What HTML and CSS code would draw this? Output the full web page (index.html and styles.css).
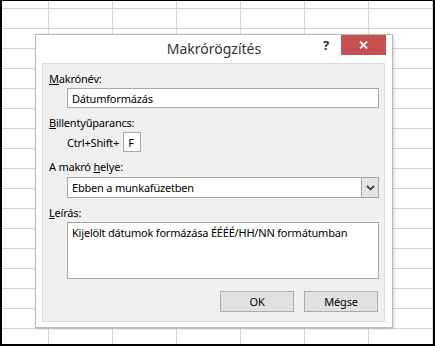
FILE: index.html
```html
<!DOCTYPE html>
<html lang="hu">
  <head>
    <meta charset="UTF-8" />
    <meta name="viewport" content="width=device-width, initial-scale=1.0" />
    <title>Makrórögzítés</title>
    <link rel="stylesheet" href="styles.css">
  </head>
  <body>
    <div class="sheet">
      <div class="dialog">
        <div class="title-bar">
          <span></span>
          <span class="title">Makrórögzítés</span>
          <div class="controls">
            <span class="help">?</span>
            <span class="close">
              <svg width="9" height="8" viewBox="0 0 9 8">
                <path d="M1 0.5 L8 7.5 M8 0.5 L1 7.5" stroke="#fff" stroke-width="1.8" />
              </svg>
            </span>
          </div>
        </div>
        <div class="panel">
          <div class="label"><u>M</u>akrónév:</div>
          <input class="field" type="text" value="Dátumformázás">
          <div class="label gap"><u>B</u>illentyűparancs:</div>
          <div class="shortcut">
            <span>Ctrl+Shift+</span>
            <input class="key" type="text" value="F">
          </div>
          <div class="label gap">A makró <u>h</u>elye:</div>
          <div class="select">
            <span class="select-text">Ebben a munkafüzetben</span>
            <span class="arrow">
              <svg width="9" height="6" viewBox="0 0 9 6">
                <path d="M1 1 L4.5 4.5 L8 1" stroke="#444" stroke-width="1.8" fill="none" />
              </svg>
            </span>
          </div>
          <div class="label gap"><u>L</u>eírás:</div>
          <textarea class="desc">Kijelölt dátumok formázása ÉÉÉÉ/HH/NN formátumban</textarea>
          <div class="buttons">
            <button>OK</button>
            <button>Mégse</button>
          </div>
        </div>
      </div>
    </div>
  </body>
</html>
```

FILE: styles.css
```css
body {
  margin: 0;
  font-family: "Noto Sans", "Open Sans", sans-serif;
  font-size: 11px;
  letter-spacing: -0.2px;
  color: #000;
}
.sheet {
  box-sizing: border-box;
  width: 435px;
  height: 346px;
  border: 2px solid #000;
  border-top-width: 1px;
  background-color: #fff;
  background-image: linear-gradient(to right, #d4d4d4 1px, transparent 1px),
    linear-gradient(to bottom, #d4d4d4 1px, transparent 1px);
  background-size: 64px 20px;
  background-position: 46px 7px;
  padding: 33px 0 0 33px;
}
.dialog {
  width: 356px;
  background: #fff;
  border: 1px solid #b9b9b9;
  box-shadow: 1px 1px 3px rgba(0, 0, 0, 0.18);
}
.title-bar {
  display: grid;
  grid-template-columns: 1fr auto 1fr;
  height: 28px;
}
.title {
  font-size: 14px;
  letter-spacing: 0;
  line-height: 28px;
  color: #333;
}
.controls {
  display: flex;
  justify-content: flex-end;
  align-items: flex-start;
  padding-right: 6px;
}
.help {
  font-weight: bold;
  font-size: 13px;
  line-height: 20px;
  color: #333;
  margin-right: 12px;
}
.close {
  display: flex;
  align-items: center;
  justify-content: center;
  width: 45px;
  height: 20px;
  background: #c75050;
}
.panel {
  margin: 0 7px 5px 6px;
  background: #f0f0f0;
  border: 1px solid #dadada;
  padding: 7px 5px 9px 6px;
  display: flex;
  flex-direction: column;
}
.label {
  line-height: 16px;
  margin-bottom: 1px;
}
.label.gap {
  margin-top: 7px;
}
.field,
.key,
.desc,
.select {
  box-sizing: border-box;
  font: inherit;
  letter-spacing: inherit;
  color: #000;
  background: #fff;
  border: 1px solid #a9a9a9;
  margin: 0;
  outline: none;
}
.field {
  margin-left: 18px;
  width: 312px;
  height: 20px;
  padding: 0 4px;
}
.shortcut {
  display: flex;
  align-items: center;
  margin-left: 18px;
  gap: 4px;
  height: 20px;
}
.key {
  width: 18px;
  height: 20px;
  padding: 0 4px;
}
.select {
  margin-left: 18px;
  width: 312px;
  height: 21px;
  display: flex;
  align-items: stretch;
  border-color: #a5a5a5;
}
.select-text {
  flex: 1;
  padding-left: 4px;
  line-height: 19px;
}
.arrow {
  width: 16px;
  display: flex;
  align-items: center;
  justify-content: center;
  background: #e3e3e3;
  border-left: 1px solid #a5a5a5;
}
.label + .select {
  margin-top: 1px;
}
.desc {
  margin-left: 18px;
  width: 312px;
  height: 57px;
  padding: 2px 4px;
  resize: none;
  overflow: hidden;
}
.buttons {
  display: flex;
  justify-content: flex-end;
  gap: 10px;
  margin-top: 12px;
  padding-right: 1px;
}
.buttons button {
  font: inherit;
  letter-spacing: inherit;
  width: 74px;
  height: 21px;
  background: #e1e1e1;
  border: 1px solid #adadad;
  color: #000;
  padding: 0;
}
```
